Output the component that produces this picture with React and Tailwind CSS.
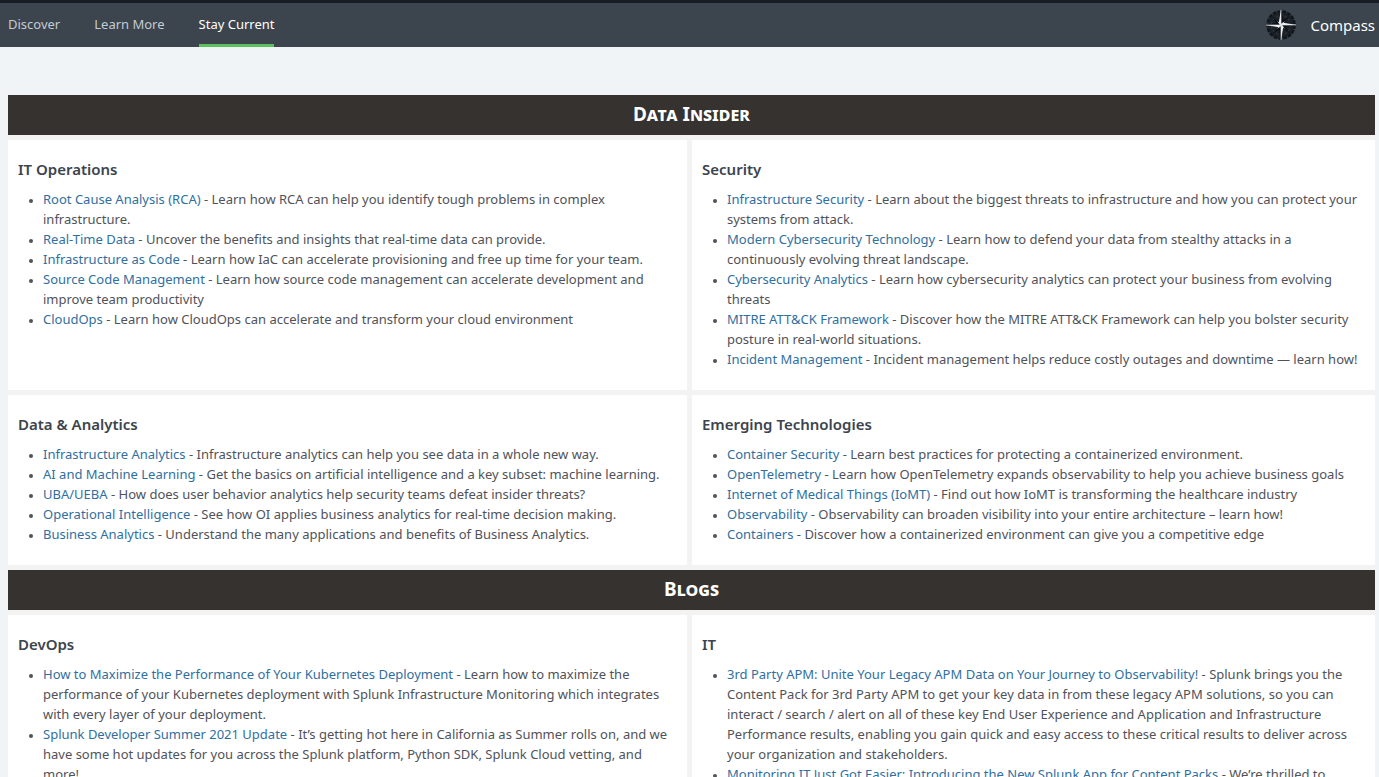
const NAV = [
  { label: 'Discover' },
  { label: 'Learn More' },
  { label: 'Stay Current', active: true },
];

const SECTIONS = [
  {
    title: 'Data Insider',
    topics: [
      {
        title: 'IT Operations',
        items: [
          ['Root Cause Analysis (RCA)', 'Learn how RCA can help you identify tough problems in complex infrastructure.'],
          ['Real-Time Data', 'Uncover the benefits and insights that real-time data can provide.'],
          ['Infrastructure as Code', 'Learn how IaC can accelerate provisioning and free up time for your team.'],
          ['Source Code Management', 'Learn how source code management can accelerate development and improve team productivity'],
          ['CloudOps', 'Learn how CloudOps can accelerate and transform your cloud environment'],
        ],
      },
      {
        title: 'Security',
        items: [
          ['Infrastructure Security', 'Learn about the biggest threats to infrastructure and how you can protect your systems from attack.'],
          ['Modern Cybersecurity Technology', 'Learn how to defend your data from stealthy attacks in a continuously evolving threat landscape.'],
          ['Cybersecurity Analytics', 'Learn how cybersecurity analytics can protect your business from evolving threats'],
          ['MITRE ATT&CK Framework', 'Discover how the MITRE ATT&CK Framework can help you bolster security posture in real-world situations.'],
          ['Incident Management', 'Incident management helps reduce costly outages and downtime — learn how!'],
        ],
      },
      {
        title: 'Data & Analytics',
        items: [
          ['Infrastructure Analytics', 'Infrastructure analytics can help you see data in a whole new way.'],
          ['AI and Machine Learning', 'Get the basics on artificial intelligence and a key subset: machine learning.'],
          ['UBA/UEBA', 'How does user behavior analytics help security teams defeat insider threats?'],
          ['Operational Intelligence', 'See how OI applies business analytics for real-time decision making.'],
          ['Business Analytics', 'Understand the many applications and benefits of Business Analytics.'],
        ],
      },
      {
        title: 'Emerging Technologies',
        items: [
          ['Container Security', 'Learn best practices for protecting a containerized environment.'],
          ['OpenTelemetry', 'Learn how OpenTelemetry expands observability to help you achieve business goals'],
          ['Internet of Medical Things (IoMT)', 'Find out how IoMT is transforming the healthcare industry'],
          ['Observability', 'Observability can broaden visibility into your entire architecture – learn how!'],
          ['Containers', 'Discover how a containerized environment can give you a competitive edge'],
        ],
      },
    ],
  },
  {
    title: 'Blogs',
    topics: [
      {
        title: 'DevOps',
        items: [
          ['How to Maximize the Performance of Your Kubernetes Deployment', 'Learn how to maximize the performance of your Kubernetes deployment with Splunk Infrastructure Monitoring which integrates with every layer of your deployment.'],
          ['Splunk Developer Summer 2021 Update', 'It’s getting hot here in California as Summer rolls on, and we have some hot updates for you across the Splunk platform, Python SDK, Splunk Cloud vetting, and more!'],
        ],
      },
      {
        title: 'IT',
        items: [
          ['3rd Party APM: Unite Your Legacy APM Data on Your Journey to Observability!', 'Splunk brings you the Content Pack for 3rd Party APM to get your key data in from these legacy APM solutions, so you can interact / search / alert on all of these key End User Experience and Application and Infrastructure Performance results, enabling you gain quick and easy access to these critical results to deliver across your organization and stakeholders.'],
          ['Monitoring IT Just Got Easier: Introducing the New Splunk App for Content Packs', 'We’re thrilled to'],
        ],
      },
    ],
  },
];

function CompassIcon() {
  return (
    <svg viewBox="0 0 34 34" className="size-[34px]" aria-hidden="true">
      <circle cx="17" cy="17" r="13" fill="#1b2127" />
      <circle cx="17" cy="17" r="13.6" fill="none" stroke="#11161a" strokeWidth="2.4" strokeDasharray="4 1" />
      <circle cx="17" cy="17" r="9.5" fill="none" stroke="#3a424a" strokeWidth="1" strokeDasharray="2 2.4" />
      <path d="M17 17 8 8l6 10zM17 17l9-9-10 6zM17 17l9 9-6-10zM17 17l-9 9 10-6z" fill="#0c1014" />
      <path d="M17 1l2.4 13.6L33 17l-13.6 2.4L17 33l-2.4-13.6L1 17l13.6-2.4z" fill="#0b0f13" />
      <path d="M17 1v16l-2.2-2.2zM33 17H17l2.2-2.2zM17 33V17l2.2 2.2zM1 17h16l-2.2 2.2z" fill="#f4f6f7" />
      <path d="M17 2v30M2 17h30" stroke="#d5dadd" strokeWidth=".7" />
      <path d="M13.2 13.2l3.8 2.6 3.8-2.6-2.6 3.8 2.6 3.8-3.8-2.6-3.8 2.6 2.6-3.8z" fill="#dfe4e7" />
    </svg>
  );
}

function Topic({ title, items }) {
  return (
    <section className="bg-white px-[10px] pt-[19px] pb-[21px]">
      <h3 className="text-[15px] leading-5 font-semibold text-[#3c444d]">{title}</h3>
      <ul className="mt-[10px] list-disc pl-[25px] marker:text-[10px]">
        {items.map(([name, text]) => (
          <li key={name}>
            <a href="#" className="text-[#2f6f9f] hover:underline">{name}</a> - {text}
          </li>
        ))}
      </ul>
    </section>
  );
}

export default function App() {
  return (
    <div className="min-h-screen bg-[#f1f4f7] font-['Noto_Sans',sans-serif] text-[13px] leading-5 text-[#50525a]">
      <header className="flex h-[47px] items-stretch justify-between border-t-[3px] border-[#171d25] bg-[#3c444d] pr-1 pl-2">
        <nav className="flex gap-[34px]">
          {NAV.map(({ label, active }) => (
            <a
              key={label}
              href="#"
              aria-current={active ? 'page' : undefined}
              className={
                active
                  ? 'flex items-center border-b-[3px] border-[#5cc05c] text-white'
                  : 'flex items-center border-b-[3px] border-transparent text-[#c3cbd4]'
              }
            >
              {label}
            </a>
          ))}
        </nav>
        <div className="flex items-center gap-3 text-[15px] text-white">
          <CompassIcon />
          <h1>Compass</h1>
        </div>
      </header>
      <main className="pt-12 pr-1 pl-2">
        <div className="flex flex-col gap-[5px] bg-[#f3f3f3]">
          {SECTIONS.map(({ title, topics }) => (
            <div key={title} className="flex flex-col gap-[5px]">
              <h2 className="bg-[#363230] pt-[9px] pb-[11px] text-center text-[19px] leading-5 font-bold text-white [font-variant:small-caps]">
                {title}
              </h2>
              <div className="grid grid-cols-[679fr_683fr] gap-[5px]">
                {topics.map((topic) => (
                  <Topic key={topic.title} {...topic} />
                ))}
              </div>
            </div>
          ))}
        </div>
      </main>
    </div>
  );
}
